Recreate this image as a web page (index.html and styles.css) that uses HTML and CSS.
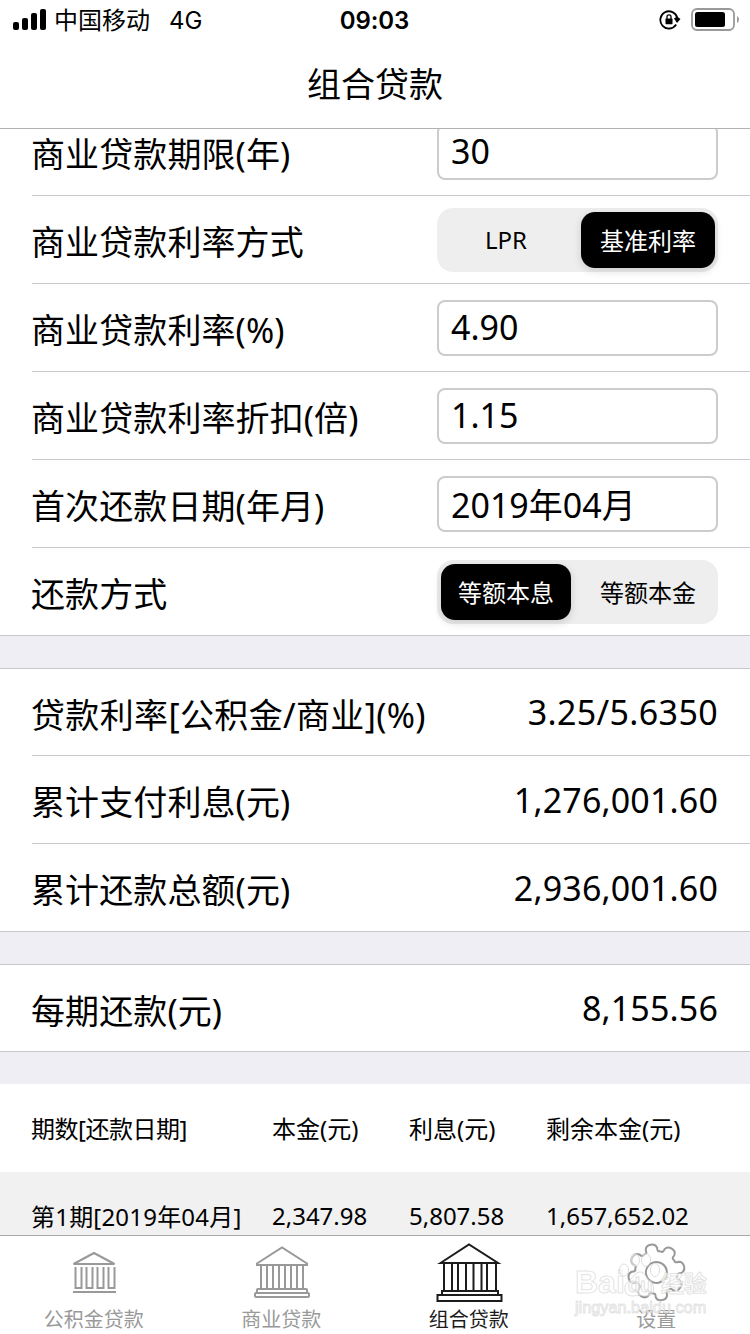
FILE: index.html
```html
<!DOCTYPE html>
<html lang="zh-CN">
<head>
  <meta charset="UTF-8" />
  <meta name="viewport" content="width=device-width, initial-scale=1" />
  <title>组合贷款</title>
  <link rel="stylesheet" href="styles.css">
</head>
<body>

  <header class="header">
    <div class="status">
      <div class="status-left">
        <svg class="signal" width="34" height="22" viewBox="0 0 34 22">
          <rect x="0" y="13" width="6" height="8" rx="2" />
          <rect x="9" y="9" width="6" height="12" rx="2" />
          <rect x="18" y="4" width="6" height="17" rx="2" />
          <rect x="27" y="0" width="6" height="21" rx="2" />
        </svg>
        <span class="carrier">中国移动</span>
        <span class="network">4G</span>
      </div>
      <div class="time">09:03</div>
      <div class="status-right">
        <svg class="lock" width="22" height="20" viewBox="0 0 22 20">
          <path d="M17.200 14.500A8.600 8.600 0 1 1 18.300 8" fill="none" stroke="#000" stroke-width="1.800" />
          <path d="M15 8.500l3-2 3.500 2.500-3.500 4z" />
          <rect x="6.500" y="8.600" width="7" height="5.600" rx="0.600" />
          <path d="M8 9V6.800a2 2 0 0 1 4 0V9" fill="none" stroke="#000" stroke-width="1.300" />
        </svg>
        <svg width="48" height="24" viewBox="0 0 48 24">
          <rect x="1" y="1" width="42" height="21" rx="5" fill="none" stroke="#999" stroke-width="1.800" />
          <rect x="4" y="4" width="30" height="15" rx="2.500" />
          <path d="M46 8v7q2-1 2-3.500t-2-3.500z" fill="#999" />
        </svg>
      </div>
    </div>
    <h1 class="title">组合贷款</h1>
  </header>

  <main class="content">
    <section class="group form">
      <div class="row">
        <span class="label">商业贷款期限(年)</span>
        <input type="text" class="field" value="30" />
      </div>
      <div class="row">
        <span class="label">商业贷款利率方式</span>
        <div class="segment">
          <button>LPR</button>
          <button class="active">基准利率</button>
        </div>
      </div>
      <div class="row">
        <span class="label">商业贷款利率(%)</span>
        <input type="text" class="field" value="4.90" />
      </div>
      <div class="row">
        <span class="label">商业贷款利率折扣(倍)</span>
        <input type="text" class="field" value="1.15" />
      </div>
      <div class="row">
        <span class="label">首次还款日期(年月)</span>
        <input type="text" class="field" value="2019年04月" />
      </div>
      <div class="row">
        <span class="label">还款方式</span>
        <div class="segment">
          <button class="active">等额本息</button>
          <button>等额本金</button>
        </div>
      </div>
    </section>

    <section class="group result">
      <div class="row">
        <span class="label rates">贷款利率[公积金/商业](%)</span>
        <span class="value rates">3.25/5.6350</span>
      </div>
      <div class="row">
        <span class="label">累计支付利息(元)</span>
        <span class="value">1,276,001.60</span>
      </div>
      <div class="row">
        <span class="label">累计还款总额(元)</span>
        <span class="value">2,936,001.60</span>
      </div>
    </section>

    <section class="group result">
      <div class="row">
        <span class="label">每期还款(元)</span>
        <span class="value">8,155.56</span>
      </div>
    </section>

    <section class="table">
      <div class="table-row table-head">
        <span class="period">期数[还款日期]</span>
        <span>本金(元)</span>
        <span>利息(元)</span>
        <span>剩余本金(元)</span>
      </div>
      <div class="table-row odd">
        <span class="period">第1期[2019年04月]</span>
        <span>2,347.98</span>
        <span>5,807.58</span>
        <span>1,657,652.02</span>
      </div>
    </section>
  </main>

  <nav class="tabbar">
    <a class="tab">
      <svg class="icon" width="64" height="64" viewBox="0 0 64 64">
        <path d="M11.500 24L32 13l20.500 11z" />
        <path d="M13.500 27v21h6V27M24.500 27v21h6V27M35.500 27v21h6V27M46.500 27v21h6V27M11 52h43" />
      </svg>
      <span>公积金贷款</span>
    </a>
    <a class="tab">
      <svg class="icon" width="64" height="64" viewBox="0 0 64 64">
        <path d="M8 23.500L33 7.500l25 16V25H8z" />
        <path d="M12 25v24M18 25v24M24 25v24M30 25v24M36 25v24M42 25v24M48 25v24M54 25v24" />
        <rect x="8" y="49" width="50" height="4" rx="1" />
        <rect x="6" y="53" width="54" height="4" rx="1" />
      </svg>
      <span>商业贷款</span>
    </a>
    <a class="tab selected">
      <svg class="icon" width="64" height="64" viewBox="0 0 64 64">
        <path d="M3.500 23L32 4.500 61 23z" />
        <path d="M7 23v28M15 23v28M21 23v28M29 23v28M36.500 23v28M44.500 23v28M50 23v28M59 23v28" />
        <rect x="5" y="51" width="56" height="4" />
        <rect x="0.500" y="55" width="64" height="6" />
      </svg>
      <span>组合贷款</span>
    </a>
    <a class="tab">
      <svg class="icon gear" width="64" height="64" viewBox="0 0 64 64">
        <defs>
          <path id="tooth" d="M-8.400-20.300Q-5-19-5.800-24Q-5-28.300 0-28.300T5.800-24Q5-19 8.400-20.300" />
        </defs>
        <g transform="translate(32.400 32.400) rotate(-12)">
          <use href="#tooth" />
          <use href="#tooth" transform="rotate(45)" />
          <use href="#tooth" transform="rotate(90)" />
          <use href="#tooth" transform="rotate(135)" />
          <use href="#tooth" transform="rotate(180)" />
          <use href="#tooth" transform="rotate(225)" />
          <use href="#tooth" transform="rotate(270)" />
          <use href="#tooth" transform="rotate(315)" />
          <circle r="10.500" />
        </g>
      </svg>
      <span>设置</span>
    </a>
  </nav>

  <div class="watermark">
    <div class="brand">
      <span>Bai</span>
      <svg width="46" height="46" viewBox="0 0 46 46">
        <ellipse cx="6" cy="18" rx="4.500" ry="6" />
        <ellipse cx="17" cy="8" rx="4.500" ry="6.500" />
        <ellipse cx="28" cy="8" rx="4.500" ry="6.500" />
        <ellipse cx="37" cy="18" rx="4.500" ry="6.500" />
        <path d="M22 20c5 0 6 6 10 9 6 5 4 15-3 15-4 0-10-1-14 0-8 1-11-9-5-14 5-4 7-10 12-10z" />
        <text x="10" y="40">du</text>
      </svg>
      <span class="brand-cn">经验</span>
    </div>
    <div class="site">jingyan.baidu.com</div>
  </div>

</body>
</html>
```
FILE: styles.css
```css
* {
  box-sizing: border-box;
}

body {
  display: flex;
  flex-direction: column;
  height: 1334px;
  margin: 0;
  overflow: hidden;
  background: #efeef4;
  font-family: "Noto Sans", "Noto Sans CJK SC", sans-serif;
  font-size: 34px;
  color: #000;
}

/* Status bar and title */
.header {
  flex: none;
  height: 129px;
  background: #fff;
  border-bottom: 1px solid #b2b2b2;
}

.status {
  display: grid;
  grid-template-columns: 1fr auto 1fr;
  align-items: center;
  height: 40px;
  padding: 0 11px 0 13px;
  font-family: Inter, "Noto Sans CJK SC", sans-serif;
  font-size: 24px;
}

.status-left,
.status-right {
  display: flex;
  align-items: center;
}

.status-right {
  justify-content: flex-end;
  gap: 10px;
}

.signal {
  margin-right: 7px;
}

.carrier {
  margin: -3px 19px 0 0;
}

.time {
  margin-left: -3px;
  font-weight: 600;
  letter-spacing: -0.1px;
}

.title {
  margin: 0;
  font-size: 34px;
  font-weight: 400;
  line-height: 88px;
  text-align: center;
}

/* Scrolled list */
.content {
  flex: 1;
  min-height: 0;
  overflow: hidden;
}

.group {
  margin-bottom: 32px;
  background: #fff;
  border-top: 1px solid #c8c7cc;
}

.form {
  margin-top: -22px;
}

.row {
  display: flex;
  justify-content: space-between;
  align-items: center;
  height: 88px;
  margin-left: 32px;
  padding-right: 32px;
  border-bottom: 1px solid #c8c7cc;
}

.result .row:first-child {
  height: 87px;
}

.row:last-child {
  margin-left: 0;
  padding-left: 32px;
}

.label {
  margin-left: -1px;
  padding-top: 5px;
  letter-spacing: 0.1px;
  line-height: 44px;
  white-space: nowrap;
}

.value {
  letter-spacing: 0.15px;
  line-height: 44px;
}

.rates {
  letter-spacing: 0.35px;
}

.field {
  width: 281px;
  height: 56px;
  padding: 0 12px 1px;
  border: 2px solid #ccc;
  border-radius: 8px;
  background: #fff;
  font: inherit;
  color: #000;
}

.segment {
  display: grid;
  grid-template-columns: 130px 134px;
  gap: 10px;
  width: 281px;
  height: 64px;
  padding: 4px 3px 4px 4px;
  border-radius: 16px;
  background: #eee;
}

.segment button {
  padding: 0;
  border: none;
  border-radius: 14px;
  background: none;
  font: inherit;
  font-size: 24px;
  color: #000;
}

.segment .active {
  background: #000;
  color: #fff;
  box-shadow: 0 3px 8px rgba(0, 0, 0, 0.15);
}

/* Repayment table */
.table {
  background: #fff;
  font-size: 24px;
}

.table-row {
  display: grid;
  grid-template-columns: 240px 137px 137px 1fr;
  align-items: center;
  height: 88px;
  padding: 0 0 2px 32px;
  white-space: nowrap;
}

.period {
  margin-left: -1px;
  letter-spacing: 0.2px;
}

.table-head .period {
  letter-spacing: -0.5px;
}

.odd {
  background: #f1f1f1;
}

/* Bottom tabs */
.tabbar {
  display: grid;
  grid-template-columns: repeat(4, 1fr);
  flex: none;
  height: 99px;
  background: #fff;
  border-top: 1px solid #a9a9a9;
}

.tab {
  display: flex;
  flex-direction: column;
  align-items: center;
  padding-top: 4px;
  font-size: 20px;
  line-height: 31px;
  color: #999;
}

.icon {
  flex: none;
  overflow: visible;
  fill: none;
  stroke: currentColor;
  stroke-width: 2;
}

.selected {
  color: #1c1c1c;
}

/* Watermark over the tabs */
.watermark {
  position: absolute;
  left: 575px;
  top: 1250px;
  width: 140px;
  font-family: "Liberation Sans", "Noto Sans CJK SC", sans-serif;
  color: rgba(255, 255, 255, 0.75);
  -webkit-text-stroke: 1px rgba(200, 200, 200, 0.5);
  pointer-events: none;
}

.brand {
  display: flex;
  align-items: flex-end;
  height: 48px;
  font-size: 32px;
  font-weight: 700;
  line-height: 32px;
}

.brand svg {
  flex: none;
  margin: 0 -3px 0 -7px;
  fill: rgba(255, 255, 255, 0.5);
  stroke: rgba(200, 200, 200, 0.6);
}

.brand text {
  font-size: 20px;
}

.brand-cn {
  font-size: 23px;
  line-height: 28px;
}

.site {
  font-size: 16.3px;
  line-height: 18px;
}
```
